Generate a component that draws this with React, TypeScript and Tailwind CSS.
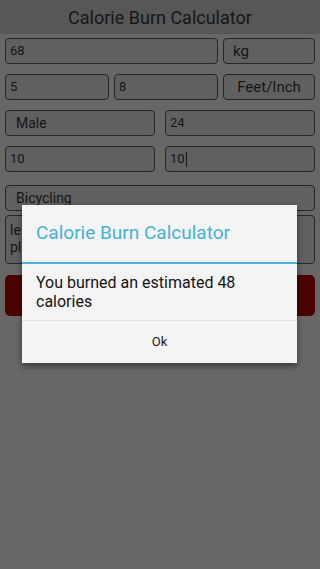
import React from "react";

function Box({ children, className = "" }: { children?: React.ReactNode; className?: string }) {
  return (
    <div
      className={`flex h-[26px] items-center rounded-[4px] border-[1.5px] border-[#262626] bg-[#606060] px-[4px] text-[13px] text-[#151515] ${className}`}
    >
      {children}
    </div>
  );
}

export default function App() {
  return (
    <div
      className="relative h-[569px] w-[320px] overflow-hidden bg-[#676767]"
      style={{ fontFamily: "Roboto, 'Noto Sans', sans-serif" }}
    >
      <div className="flex h-[34px] items-center justify-center bg-[#575757] text-[18px] text-[#161616]">
        Calorie Burn Calculator
      </div>

      <div className="flex flex-col px-[5px] pt-[4px]">
        <div className="flex gap-[5px]">
          <Box className="w-[213px]">68</Box>
          <Box className="flex-1 pl-[9px] text-[15px]">kg</Box>
        </div>
        <div className="mt-[10px] flex gap-[5px]">
          <Box className="w-[104px]">5</Box>
          <Box className="w-[104px]">8</Box>
          <Box className="flex-1 justify-center text-[15px]">Feet/Inch</Box>
        </div>
        <div className="mt-[10px] flex justify-between">
          <Box className="w-[150px] pl-[10px] text-[14px]">Male</Box>
          <Box className="w-[150px]">24</Box>
        </div>
        <div className="mt-[10px] flex justify-between">
          <Box className="w-[150px]">10</Box>
          <Box className="w-[150px]">
            10<span className="ml-px inline-block h-[15px] w-px bg-[#151515]" />
          </Box>
        </div>
        <Box className="mt-[13px] pl-[10px] text-[14px]">Bicycling</Box>
        <div className="mt-[4px] h-[49px] rounded-[4px] border-[1.5px] border-[#262626] bg-[#606060] px-[4px] pt-[6px] text-[14px] leading-[17px] text-[#151515]">
          <div>le</div>
          <div>pl</div>
        </div>
        <div className="mt-[11px] h-[41px] rounded-[5px] bg-[#4a0202]" />
      </div>

      <div className="absolute left-[22px] top-[205px] w-[275px] bg-[#f4f4f4] shadow-[0_3px_6px_rgba(0,0,0,0.45)]">
        <div className="flex h-[57px] items-center pl-[14px] text-[19px] text-[#45b2d9]">
          Calorie Burn Calculator
        </div>
        <div className="h-[2px] bg-[#4ab3da]" />
        <div className="px-[14px] pt-[9px] pb-[9px] text-[16px] leading-[19px] text-[#141414]">
          You burned an estimated 48 calories
        </div>
        <div className="h-px bg-[#e2e2e2]" />
        <div className="flex h-[42px] items-center justify-center text-[13px] text-[#1a1a1a]">Ok</div>
      </div>
    </div>
  );
}
